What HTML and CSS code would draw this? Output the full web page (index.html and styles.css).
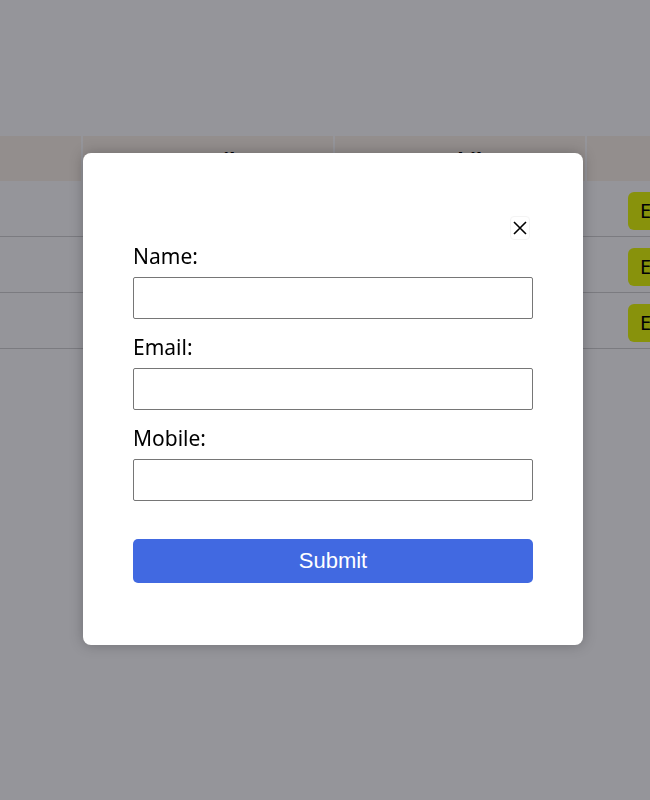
FILE: index.html
```html
<!DOCTYPE html>
<html>
<head>
<meta charset="utf-8">
<link rel="stylesheet" href="styles.css">
</head>
<body>
<div class="page">
  <table class="grid">
    <colgroup>
      <col class="w-first"><col class="w-col"><col class="w-col"><col class="w-col">
    </colgroup>
    <thead>
      <tr><th></th><th>Email</th><th>Mobile</th><th></th></tr>
    </thead>
    <tbody>
      <tr><td></td><td></td><td></td><td class="c-act"><button class="edit">Edit</button></td></tr>
      <tr><td></td><td></td><td></td><td class="c-act"><button class="edit">Edit</button></td></tr>
      <tr><td></td><td></td><td></td><td class="c-act"><button class="edit">Edit</button></td></tr>
    </tbody>
  </table>
</div>
<div class="overlay">
  <div class="modal">
    <div class="close-row">
      <button class="close" aria-label="Close">
        <svg width="14" height="14" viewBox="0 0 14 14"><path d="M1 1L13 13M13 1L1 13" stroke="#000" stroke-width="1.6" fill="none"/></svg>
      </button>
    </div>
    <form class="form">
      <label class="lbl first">Name:</label>
      <input class="inp" type="text">
      <label class="lbl">Email:</label>
      <input class="inp" type="text">
      <label class="lbl">Mobile:</label>
      <input class="inp" type="text">
      <button type="button" class="submit">Submit</button>
    </form>
  </div>
</div>
</body>
</html>
```

FILE: styles.css
```css
html, body {
  margin: 0;
  padding: 0;
  background: #ffffff;
  font-family: "Noto Sans", "Open Sans", sans-serif;
}
.page {
  padding-top: 134px;
  overflow: hidden;
  width: 650px;
}
.grid {
  border-collapse: collapse;
  table-layout: fixed;
  margin-left: -171px;
  width: 1008px;
}
.w-first { width: 252px; }
.w-col { width: 252px; }
.grid th {
  background: #fcf3e8;
  height: 46px;
  box-sizing: border-box;
  font-size: 20px;
  font-weight: 700;
  border-left: 2px solid #ffffff;
  border-top: 2px solid #ffffff;
  padding: 10px 0 0;
  line-height: 28px;
  vertical-align: top;
}
.grid td {
  height: 55px;
  border-bottom: 1px solid #d2d2d2;
  padding: 0;
}
td.c-act { padding-left: 42px; }
.edit {
  background: #e9fa0c;
  border: none;
  border-radius: 6px;
  height: 38px;
  margin-top: 4px;
  padding: 0 12px;
  font-family: "Noto Sans", sans-serif;
  font-size: 20px;
  color: #000;
}
.overlay {
  position: fixed;
  inset: 0;
  background: rgba(2, 2, 14, 0.42);
}
.modal {
  position: absolute;
  left: 83px;
  top: 153px;
  width: 400px;
  padding: 63px 50px 62px;
  background: #ffffff;
  border-radius: 8px;
  box-shadow: 0 0 14px rgba(0, 0, 0, 0.25);
}
.close-row {
  display: flex;
  justify-content: flex-end;
  padding-right: 3px;
}
.close {
  width: 20px;
  height: 24px;
  padding: 0;
  background: #fff;
  border: 1px solid #f4f4f4;
  border-radius: 4px;
  display: flex;
  align-items: center;
  justify-content: center;
}
.form {
  display: flex;
  flex-direction: column;
}
.lbl {
  font-size: 21px;
  line-height: 28px;
  height: 28px;
  margin-top: 14px;
  margin-bottom: 7px;
  color: #000;
}
.lbl.first { margin-top: 2px; }
.inp {
  box-sizing: border-box;
  width: 400px;
  height: 42px;
  margin: 0;
  border: 1px solid #767676;
  border-radius: 2px;
  font-size: 18px;
}
.submit {
  margin-top: 38px;
  width: 400px;
  height: 44px;
  border: none;
  border-radius: 5px;
  background: #4169e1;
  color: #ffffff;
  font-family: "Liberation Sans", Arial, sans-serif;
  font-size: 22px;
}
```
